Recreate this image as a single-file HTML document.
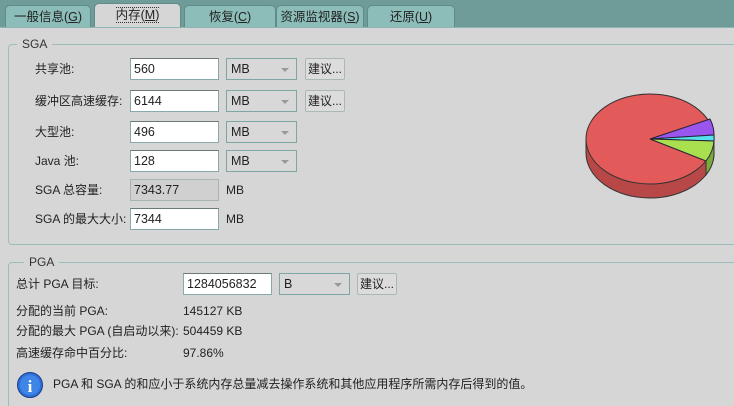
<!DOCTYPE html>
<html><head><meta charset="utf-8"><style>
*{margin:0;padding:0;box-sizing:border-box}
html,body{width:734px;height:406px;overflow:hidden}
body{background:#d6d6d6;font-family:"Liberation Sans","Noto Sans CJK SC",sans-serif;font-size:12px;color:#222;position:relative}
.top{position:absolute;left:0;top:0;width:734px;height:28px;background:#6f9c99}
.tab{position:absolute;top:5px;height:24px;background:#8cbdb8;border:1px solid #5e8c88;border-bottom:none;border-radius:5px 5px 0 0;text-align:center;line-height:22px;font-size:12.5px;color:#222}
.tab.sel{background:#d6d6d6;top:3px;height:26px}
.tab.sel span{border-top:1px dotted #333;border-bottom:1px dotted #333}
.panel{position:absolute;left:0;top:27px;width:734px;height:379px;background:#d6d6d6;border-top:1px solid #8fb5b2}
.grp{position:absolute;border:1px solid #9cbcb9;border-radius:4px}
.glab{position:absolute;background:#d6d6d6;padding:0 5px;font-size:12px;line-height:14px;color:#333}
.t{position:absolute;font-size:12px;line-height:14px;white-space:nowrap}
.in{position:absolute;background:#fff;border:1px solid #8aa;border-top-color:#6a7a78;height:22px;padding:3px 3px;font-size:12.5px;line-height:15px}
.in.ro{background:#d0d0d0;border-color:#a8b4b2}
.cb{position:absolute;background:#d8d8d8;border:1px solid #7ea6a2;height:22px;padding:3px 4px;font-size:12.5px;line-height:15px}
.cb:after{content:"";position:absolute;right:7px;top:9px;border:4px solid transparent;border-top:4px solid #999}
.bt{position:absolute;background:#dcdcdc;border:1px solid #a9b9b7;border-radius:2px;height:22px;width:40px;text-align:center;line-height:20px;font-size:12px}
</style></head><body>
<div class="top"></div>
<div class="tab" style="left:5px;width:86px">一般信息(<u>G</u>)</div>
<div class="tab sel" style="left:94px;width:87px"><span>内存(<u>M</u>)</span></div>
<div class="tab" style="left:184px;width:92px">恢复(<u>C</u>)</div>
<div class="tab" style="left:276px;width:88px">资源监视器(<u>S</u>)</div>
<div class="tab" style="left:367px;width:88px">还原(<u>U</u>)</div>
<div class="panel"></div>
<div class="grp" style="left:8px;top:44px;width:740px;height:201px"></div>
<div class="glab" style="left:17px;top:37px">SGA</div>
<div class="grp" style="left:8px;top:262px;width:740px;height:150px"></div>
<div class="glab" style="left:24px;top:255px">PGA</div>

<div class="t" style="left:35px;top:62px">共享池:</div>
<div class="in" style="left:130px;top:58px;width:89px">560</div>
<div class="cb" style="left:226px;top:58px;width:71px">MB</div>
<div class="bt" style="left:305px;top:58px">建议...</div>

<div class="t" style="left:35px;top:94px">缓冲区高速缓存:</div>
<div class="in" style="left:130px;top:90px;width:89px">6144</div>
<div class="cb" style="left:226px;top:90px;width:71px">MB</div>
<div class="bt" style="left:305px;top:90px">建议...</div>

<div class="t" style="left:35px;top:125px">大型池:</div>
<div class="in" style="left:130px;top:121px;width:89px">496</div>
<div class="cb" style="left:226px;top:121px;width:71px">MB</div>

<div class="t" style="left:35px;top:154px">Java 池:</div>
<div class="in" style="left:130px;top:150px;width:89px">128</div>
<div class="cb" style="left:226px;top:150px;width:71px">MB</div>

<div class="t" style="left:35px;top:183px">SGA 总容量:</div>
<div class="in ro" style="left:130px;top:179px;width:89px">7343.77</div>
<div class="t" style="left:226px;top:183px">MB</div>

<div class="t" style="left:35px;top:212px">SGA 的最大大小:</div>
<div class="in" style="left:130px;top:208px;width:89px">7344</div>
<div class="t" style="left:226px;top:212px">MB</div>

<svg style="position:absolute;left:580px;top:87px" width="150" height="125">
<path d="M6 52 L6 66 A64 45 0 0 0 134 66 L134 52 Z" fill="#b84848" stroke="#333" stroke-width="1"/>
<ellipse cx="70" cy="52" rx="64" ry="45" fill="#e25a5a" stroke="#333"/>
<path d="M70 52 L130 32 A64 45 0 0 1 134 48 Z" fill="#9a55ee" stroke="#223"/>
<path d="M70 52 L134 48 A64 45 0 0 1 134 54 Z" fill="#55e0ee" stroke="#223"/>
<path d="M70 52 L134 54 A64 45 0 0 1 126 74 Z" fill="#a8e050" stroke="#223"/>
<path d="M126 74 L126 88 A64 45 0 0 0 134 66 L134 54 A64 45 0 0 1 126 74Z" fill="#7aaa3a" stroke="#333"/>
</svg>

<div class="t" style="left:16px;top:277px">总计 PGA 目标:</div>
<div class="in" style="left:183px;top:273px;width:89px">1284056832</div>
<div class="cb" style="left:279px;top:273px;width:71px">B</div>
<div class="bt" style="left:357px;top:273px">建议...</div>
<div class="t" style="left:16px;top:304px">分配的当前 PGA:</div>
<div class="t" style="left:183px;top:304px">145127 KB</div>
<div class="t" style="left:16px;top:324px">分配的最大 PGA (自启动以来):</div>
<div class="t" style="left:183px;top:324px">504459 KB</div>
<div class="t" style="left:16px;top:346px">高速缓存命中百分比:</div>
<div class="t" style="left:183px;top:346px">97.86%</div>
<svg style="position:absolute;left:16px;top:371px" width="28" height="28"><circle cx="14" cy="14" r="12.5" fill="#2f6fd8" stroke="#1a3f88"/><circle cx="14" cy="14" r="10" fill="#3d86e8"/><text x="14" y="21" text-anchor="middle" font-family="Liberation Serif" font-weight="bold" font-size="17" fill="#fff">i</text></svg>
<div class="t" style="left:53px;top:377px">PGA 和 SGA 的和应小于系统内存总量减去操作系统和其他应用程序所需内存后得到的值。</div>
</body></html>
